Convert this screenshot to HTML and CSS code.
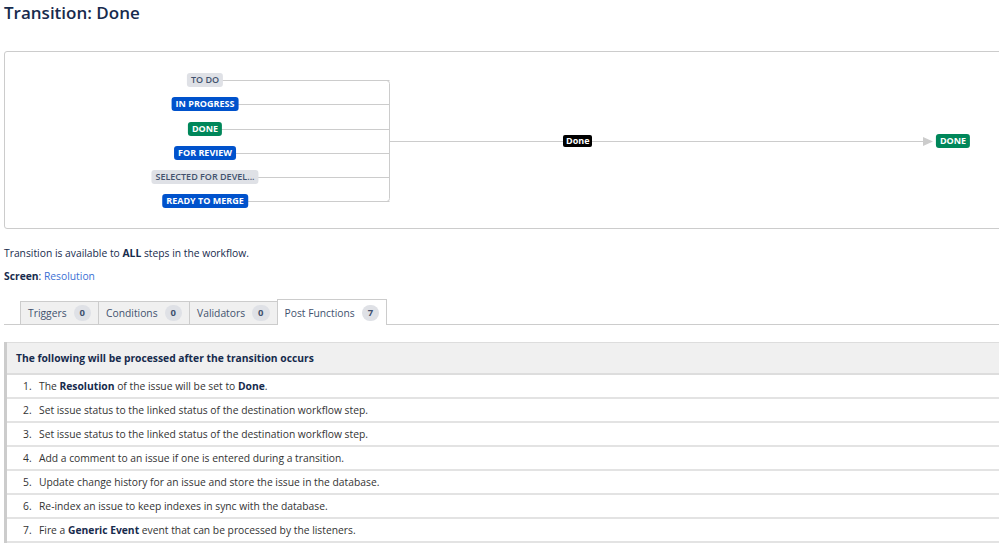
FILE: index.html
```html
<!DOCTYPE html>
<html lang="en">
<head>
    <meta charset="UTF-8">
    <title>Transition: Done</title>
    <link rel="stylesheet" href="styles.css">
</head>
<body>
    <h1 class="title">Transition: Done</h1>

    <!-- Diagrama de la transición -->
    <div class="diagram">
        <svg class="lines" width="1100" height="176">
            <g stroke="#ccc" fill="none" stroke-width="1">
                <line x1="200" y1="28.5" x2="384.5" y2="28.5"/>
                <line x1="200" y1="52.5" x2="384.5" y2="52.5"/>
                <line x1="200" y1="77.5" x2="384.5" y2="77.5"/>
                <line x1="200" y1="101.5" x2="384.5" y2="101.5"/>
                <line x1="200" y1="125.5" x2="384.5" y2="125.5"/>
                <line x1="200" y1="149.5" x2="384.5" y2="149.5"/>
                <path d="M379 28.5 H381.5 Q384.5 28.5 384.5 31.5 V146.5 Q384.5 149.5 381.5 149.5"/>
                <line x1="384.5" y1="89.5" x2="918" y2="89.5"/>
            </g>
            <polygon points="918,85 928,89.5 918,94" fill="#ccc"/>
        </svg>
        <span class="lozenge grey" style="top:21px">To Do</span>
        <span class="lozenge blue" style="top:45px">In Progress</span>
        <span class="lozenge green" style="top:70px">Done</span>
        <span class="lozenge blue" style="top:94px">For Review</span>
        <span class="lozenge grey" style="top:118px">Selected for Devel...</span>
        <span class="lozenge blue" style="top:142px">Ready to Merge</span>
        <span class="label">Done</span>
        <span class="lozenge green target">Done</span>
    </div>

    <p class="info">Transition is available to <b>ALL</b> steps in the workflow.</p>
    <p class="info"><b>Screen</b>: <a href="#">Resolution</a></p>

    <!-- Pestañas -->
    <ul class="tabs">
        <li class="tab">Triggers <span class="count">0</span></li>
        <li class="tab">Conditions <span class="count">0</span></li>
        <li class="tab">Validators <span class="count">0</span></li>
        <li class="tab active">Post Functions <span class="count">7</span></li>
    </ul>

    <table class="functions">
        <thead>
            <tr><th>The following will be processed after the transition occurs</th></tr>
        </thead>
        <tbody>
            <tr><td><span class="num">1.</span>The <b>Resolution</b> of the issue will be set to <b>Done</b>.</td></tr>
            <tr><td><span class="num">2.</span>Set issue status to the linked status of the destination workflow step.</td></tr>
            <tr><td><span class="num">3.</span>Set issue status to the linked status of the destination workflow step.</td></tr>
            <tr><td><span class="num">4.</span>Add a comment to an issue if one is entered during a transition.</td></tr>
            <tr><td><span class="num">5.</span>Update change history for an issue and store the issue in the database.</td></tr>
            <tr><td><span class="num">6.</span>Re-index an issue to keep indexes in sync with the database.</td></tr>
            <tr><td><span class="num">7.</span>Fire a <b>Generic Event</b> event that can be processed by the listeners.</td></tr>
        </tbody>
    </table>
</body>
</html>
```

FILE: styles.css
```css
body {
    font-family: "Open Sans", Arial, sans-serif;
    font-size: 10.3px;
    color: #172b4d;
    margin: 0;
    padding: 0 0 0 4px;
    overflow: hidden;
}
.title {
    font-size: 17px;
    font-weight: 600;
    margin: 0;
    padding-top: 1px;
    line-height: 24px;
}

/* Diagrama */
.diagram {
    position: relative;
    margin-top: 26px;
    width: 1100px;
    height: 176px;
    border: 1px solid #ccc;
    border-radius: 3px;
}
.lines {
    position: absolute;
    left: 0;
    top: 0;
}
.lozenge {
    position: absolute;
    left: 200px;
    transform: translateX(-50%);
    font-size: 9px;
    font-weight: 700;
    text-transform: uppercase;
    line-height: 14px;
    padding: 0 4px;
    border-radius: 3px;
    white-space: nowrap;
}
.grey {
    background-color: #dfe1e6;
    color: #42526e;
    font-weight: 600;
}
.blue {
    background-color: #0052cc;
    color: #fff;
}
.green {
    background-color: #00875a;
    color: #fff;
}
.lozenge.target {
    left: 948px;
    top: 82px;
}
.label {
    position: absolute;
    left: 558px;
    top: 83px;
    background-color: #000;
    color: #fff;
    font-size: 9px;
    font-weight: 700;
    line-height: 12px;
    padding: 0 3px;
    border-radius: 2px;
}

.info {
    margin: 16px 0 0;
    line-height: 16px;
}
.info + .info {
    margin-top: 7px;
}
.info a {
    color: #3b6fd4;
    text-decoration: none;
}

/* Pestañas */
.tabs {
    list-style: none;
    display: flex;
    margin: 16px 0 0;
    padding: 0 0 0 16px;
    border-bottom: 1px solid #ccc;
    height: 24px;
}
.tab {
    display: flex;
    align-items: center;
    gap: 7px;
    padding: 0 7px;
    background-color: #f0f0f0;
    border: 1px solid #ccc;
    border-right: none;
    border-bottom: none;
    color: #42526e;
    margin-top: 1px;
}
.tab.active {
    background-color: #fff;
    border-right: 1px solid #ccc;
    margin-top: -1px;
    margin-bottom: -1px;
}
.count {
    background-color: #dfe1e6;
    border-radius: 8px;
    font-size: 9.5px;
    font-weight: 700;
    padding: 0 6px;
    line-height: 16px;
}

/* Tabla de funciones */
.functions {
    margin-top: 17px;
    width: 1100px;
    border-collapse: collapse;
    border-left: 3px solid #ccc;
}
.functions th {
    background-color: #f0f0f0;
    text-align: left;
    font-weight: 700;
    height: 30px;
    padding: 0 0 0 9px;
    border-top: 1px solid #ddd;
    border-bottom: 2px solid #ddd;
}
.functions td {
    height: 22px;
    padding: 0 0 0 16px;
    border-bottom: 2px solid #e3e3e3;
    color: #333;
}
.functions td b {
    color: #172b4d;
}
.num {
    display: inline-block;
    width: 16px;
}
```
